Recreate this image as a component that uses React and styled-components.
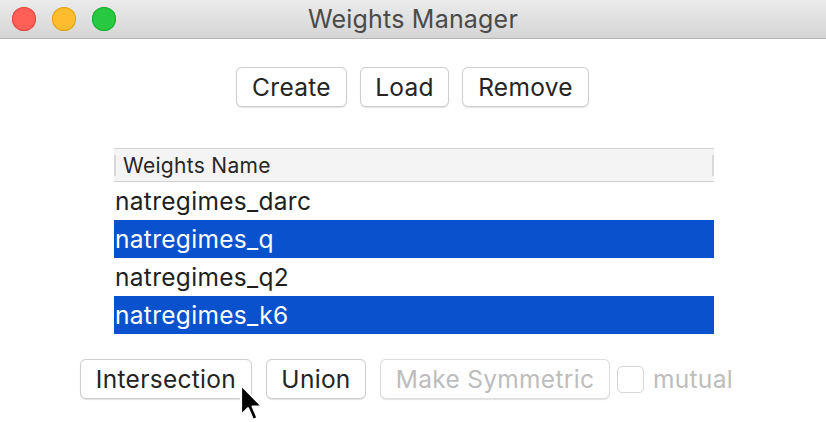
import styled, { createGlobalStyle } from 'styled-components';

const GlobalStyle = createGlobalStyle`
  html, body {
    margin: 0;
    padding: 0;
    background: #ffffff;
  }
  body {
    font-family: Inter, "Liberation Sans", sans-serif;
  }
`;

const Window = styled.div`
  position: relative;
  width: 826px;
  height: 422px;
  background: #ffffff;
  display: flex;
  flex-direction: column;
  overflow: hidden;
`;

const TitleBar = styled.div`
  height: 38px;
  display: grid;
  grid-template-columns: 1fr auto 1fr;
  align-items: center;
  background: linear-gradient(#ebebeb, #d5d5d5);
  border-bottom: 1px solid #b4b4b4;
`;

const Lights = styled.div`
  display: flex;
  gap: 16px;
  padding-left: 12px;
`;

const Light = styled.span`
  width: 24px;
  height: 24px;
  border-radius: 50%;
  background: ${(p) => p.color};
  box-shadow: inset 0 0 0 1px ${(p) => p.rim};
`;

const Title = styled.div`
  font-size: 25px;
  color: #4a4a4a;
  letter-spacing: 0.2px;
`;

const Toolbar = styled.div`
  display: flex;
  justify-content: center;
  gap: 13px;
  margin-top: 28px;
  padding-right: 1px;
`;

const Button = styled.button`
  width: ${(p) => p.w}px;
  height: 40px;
  padding: 0;
  background: #ffffff;
  border: 1px solid #cfcfcf;
  border-bottom-color: #b9b9b9;
  border-radius: 6px;
  box-shadow: 0 0.5px 1px rgba(0, 0, 0, 0.12);
  font-family: inherit;
  font-size: 24.5px;
  letter-spacing: 0.3px;
  color: ${(p) => (p.disabled ? '#bdbdbd' : '#242424')};
  border-color: ${(p) => (p.disabled ? '#dedede' : '#cfcfcf')};
`;

const Table = styled.div`
  width: 600px;
  margin: 41px 0 0 114px;
  display: flex;
  flex-direction: column;
`;

const Header = styled.div`
  height: 32px;
  display: flex;
  align-items: center;
  justify-content: space-between;
  background: #f4f4f4;
  border-top: 1px solid #d2d2d2;
  border-bottom: 1px solid #d2d2d2;
`;

const HeaderLabel = styled.div`
  display: flex;
  align-items: center;
  gap: 7px;
  font-size: 21px;
  letter-spacing: 0.3px;
  color: #262626;
`;

const Divider = styled.span`
  width: 2px;
  height: 21px;
  background: #d9d9d9;
`;

const Row = styled.div`
  height: 38px;
  display: flex;
  align-items: center;
  font-size: 24.5px;
  letter-spacing: 0.3px;
  padding-left: 1px;
  color: ${(p) => (p.selected ? '#ffffff' : '#1f1f1f')};
  background: ${(p) => (p.selected ? '#0a51cd' : 'transparent')};
`;

const Bottom = styled.div`
  display: flex;
  align-items: center;
  gap: 14px;
  margin: 25px 0 0 80px;
`;

const Mutual = styled.label`
  display: flex;
  align-items: center;
  gap: 9px;
  margin-left: -7px;
  font-size: 24.5px;
  letter-spacing: 0.3px;
  color: #bdbdbd;
`;

const Check = styled.span`
  width: 25px;
  height: 25px;
  border: 1px solid #d6d6d6;
  border-radius: 5px;
  background: #ffffff;
`;

const Cursor = styled.svg`
  position: absolute;
  left: 237px;
  top: 383px;
`;

const rows = [
  { name: 'natregimes_darc', selected: false },
  { name: 'natregimes_q', selected: true },
  { name: 'natregimes_q2', selected: false },
  { name: 'natregimes_k6', selected: true },
];

export default function App() {
  return (
    <>
      <GlobalStyle />
      <Window>
        <TitleBar>
          <Lights>
            <Light color="#fe5f57" rim="#e2463f" />
            <Light color="#febc2e" rim="#e1a116" />
            <Light color="#28c840" rim="#14ae2b" />
          </Lights>
          <Title>Weights Manager</Title>
          <div />
        </TitleBar>
        <Toolbar>
          <Button w={111}>Create</Button>
          <Button w={89}>Load</Button>
          <Button w={127}>Remove</Button>
        </Toolbar>
        <Table>
          <Header>
            <HeaderLabel>
              <Divider />
              Weights Name
            </HeaderLabel>
            <Divider />
          </Header>
          {rows.map((r) => (
            <Row key={r.name} selected={r.selected}>{r.name}</Row>
          ))}
        </Table>
        <Bottom>
          <Button w={172}>Intersection</Button>
          <Button w={100}>Union</Button>
          <Button w={230} disabled>Make Symmetric</Button>
          <Mutual>
            <Check />
            mutual
          </Mutual>
        </Bottom>
        <Cursor width="28" height="42" viewBox="0 0 14 21">
          <path d="M2 1 L2 16 L5.5 12.6 L8 18.5 L10.3 17.5 L7.8 11.8 L12.6 11.8 Z" fill="#000" stroke="#fff" strokeWidth="1.1" strokeLinejoin="round" />
        </Cursor>
      </Window>
    </>
  );
}
